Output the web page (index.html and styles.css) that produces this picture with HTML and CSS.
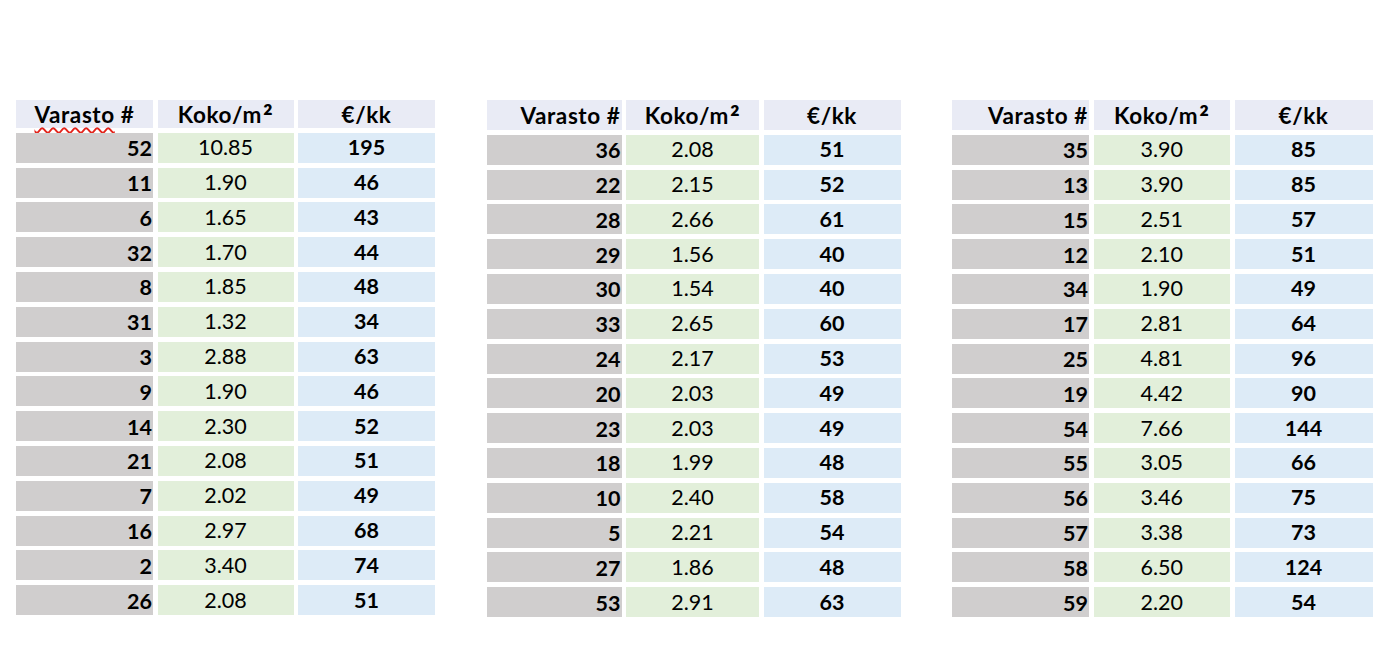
FILE: index.html
```html
<!DOCTYPE html>
<html lang="fi">
<head>
<meta charset="utf-8">
<title>Varastot</title>
<link rel="stylesheet" href="styles.css">
</head>
<body>
<main class="page">
  <section class="tbl tbl-a">
    <div class="c h h-center"><span><span class="spell">Varasto</span> #</span></div><div class="c h"><span>Koko/m<span class="sq">²</span></span></div><div class="c h"><span>€/kk</span></div>
    <div class="c n">52</div><div class="c s">10.85</div><div class="c p">195</div>
    <div class="c n">11</div><div class="c s">1.90</div><div class="c p">46</div>
    <div class="c n">6</div><div class="c s">1.65</div><div class="c p">43</div>
    <div class="c n">32</div><div class="c s">1.70</div><div class="c p">44</div>
    <div class="c n">8</div><div class="c s">1.85</div><div class="c p">48</div>
    <div class="c n">31</div><div class="c s">1.32</div><div class="c p">34</div>
    <div class="c n">3</div><div class="c s">2.88</div><div class="c p">63</div>
    <div class="c n">9</div><div class="c s">1.90</div><div class="c p">46</div>
    <div class="c n">14</div><div class="c s">2.30</div><div class="c p">52</div>
    <div class="c n">21</div><div class="c s">2.08</div><div class="c p">51</div>
    <div class="c n">7</div><div class="c s">2.02</div><div class="c p">49</div>
    <div class="c n">16</div><div class="c s">2.97</div><div class="c p">68</div>
    <div class="c n">2</div><div class="c s">3.40</div><div class="c p">74</div>
    <div class="c n">26</div><div class="c s">2.08</div><div class="c p">51</div>
  </section>
  <section class="tbl tbl-b">
    <div class="c h h-right"><span>Varasto #</span></div><div class="c h"><span>Koko/m<span class="sq">²</span></span></div><div class="c h"><span>€/kk</span></div>
    <div class="c n">36</div><div class="c s">2.08</div><div class="c p">51</div>
    <div class="c n">22</div><div class="c s">2.15</div><div class="c p">52</div>
    <div class="c n">28</div><div class="c s">2.66</div><div class="c p">61</div>
    <div class="c n">29</div><div class="c s">1.56</div><div class="c p">40</div>
    <div class="c n">30</div><div class="c s">1.54</div><div class="c p">40</div>
    <div class="c n">33</div><div class="c s">2.65</div><div class="c p">60</div>
    <div class="c n">24</div><div class="c s">2.17</div><div class="c p">53</div>
    <div class="c n">20</div><div class="c s">2.03</div><div class="c p">49</div>
    <div class="c n">23</div><div class="c s">2.03</div><div class="c p">49</div>
    <div class="c n">18</div><div class="c s">1.99</div><div class="c p">48</div>
    <div class="c n">10</div><div class="c s">2.40</div><div class="c p">58</div>
    <div class="c n">5</div><div class="c s">2.21</div><div class="c p">54</div>
    <div class="c n">27</div><div class="c s">1.86</div><div class="c p">48</div>
    <div class="c n">53</div><div class="c s">2.91</div><div class="c p">63</div>
  </section>
  <section class="tbl tbl-c">
    <div class="c h h-right"><span>Varasto #</span></div><div class="c h"><span>Koko/m<span class="sq">²</span></span></div><div class="c h"><span>€/kk</span></div>
    <div class="c n">35</div><div class="c s">3.90</div><div class="c p">85</div>
    <div class="c n">13</div><div class="c s">3.90</div><div class="c p">85</div>
    <div class="c n">15</div><div class="c s">2.51</div><div class="c p">57</div>
    <div class="c n">12</div><div class="c s">2.10</div><div class="c p">51</div>
    <div class="c n">34</div><div class="c s">1.90</div><div class="c p">49</div>
    <div class="c n">17</div><div class="c s">2.81</div><div class="c p">64</div>
    <div class="c n">25</div><div class="c s">4.81</div><div class="c p">96</div>
    <div class="c n">19</div><div class="c s">4.42</div><div class="c p">90</div>
    <div class="c n">54</div><div class="c s">7.66</div><div class="c p">144</div>
    <div class="c n">55</div><div class="c s">3.05</div><div class="c p">66</div>
    <div class="c n">56</div><div class="c s">3.46</div><div class="c p">75</div>
    <div class="c n">57</div><div class="c s">3.38</div><div class="c p">73</div>
    <div class="c n">58</div><div class="c s">6.50</div><div class="c p">124</div>
    <div class="c n">59</div><div class="c s">2.20</div><div class="c p">54</div>
  </section>
</main>
</body>
</html>
```
FILE: styles.css
```css
html, body {
  margin: 0;
  padding: 0;
  background: #ffffff;
}

.page {
  display: flex;
  align-items: flex-start;
  gap: 51.5px;
  padding: 100px 0 0 16px;
  font-family: Lato, "Liberation Sans", sans-serif;
  font-size: 21.5px;
  color: #000000;
}

.tbl {
  display: grid;
  row-gap: 4.8px;
  column-gap: 4.5px;
}

.tbl-a {
  grid-template-columns: 137px 136px 137px;
  grid-template-rows: 28px repeat(14, 30px);
}

.tbl-b {
  grid-template-columns: 135px 133px 137px;
  grid-template-rows: 30px repeat(14, 30px);
}

.tbl-c {
  grid-template-columns: 137px 136.5px 138px;
  grid-template-rows: 30px repeat(14, 30px);
}

.c {
  display: flex;
  align-items: flex-end;
  justify-content: center;
  line-height: 1;
  padding-bottom: 4px;
  box-sizing: border-box;
  white-space: nowrap;
}

.h {
  background: #e9ebf5;
  font-weight: 700;
  font-size: 22.5px;
  letter-spacing: 0.6px;
  padding-bottom: 3px;
}

.tbl-a .h {
  padding-bottom: 2px;
}

.h-center {
  justify-content: center;
}

.h-right {
  justify-content: flex-end;
  padding-right: 1px;
}

.sq {
  font-size: 1.3em;
  line-height: 0;
  margin-left: 1px;
  vertical-align: -0.2em;
}

.n {
  background: #d0cece;
  font-weight: 700;
  justify-content: flex-end;
  padding-right: 1px;
  padding-bottom: 3px;
}

.s {
  background: #e2efda;
}

.p {
  background: #ddebf7;
  font-weight: 700;
}

.spell {
  text-decoration-line: underline;
  text-decoration-style: wavy;
  text-decoration-color: #e3241b;
  text-decoration-thickness: 1.5px;
  text-underline-offset: 4px;
}
```
